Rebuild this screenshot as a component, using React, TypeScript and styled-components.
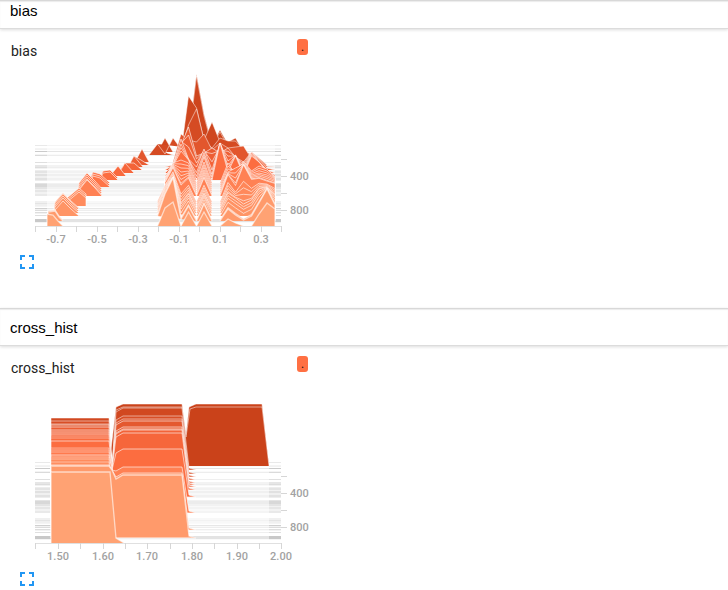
import React from "react";
import styled, { createGlobalStyle } from "styled-components";

const GlobalStyle = createGlobalStyle`
  * { box-sizing: border-box; }
  body { margin: 0; background: #fff; color: #111; font-family: Roboto, sans-serif; }
`;

const Page = styled.main`
  display: flex;
  flex-direction: column;
`;

const Section = styled.section`
  display: flex;
  flex-direction: column;

  &:not(:last-child) {
    padding-bottom: 34px;
  }
`;

const SectionHeader = styled.header<{ $compact: boolean }>`
  display: flex;
  align-items: center;
  height: ${(p) => (p.$compact ? 29 : 38)}px;
  padding: ${(p) => (p.$compact ? "0 10px 8px" : "2px 10px 0")};
  border-top: 1px solid #d8d8d8;
  border-bottom: 1px solid #dcdcdc;
  box-shadow: 0 1px 3px rgba(0, 0, 0, 0.14), inset 0 1px 1px rgba(0, 0, 0, 0.08);
`;

const SectionTitle = styled.h2`
  margin: 0;
  font: 400 15px/18px "Liberation Sans", Arial, sans-serif;
  color: #000;
`;

const Pane = styled.div`
  display: flex;
  flex-direction: column;
  align-items: flex-start;
  padding-top: 10px;
`;

const CardHead = styled.div`
  display: flex;
  justify-content: space-between;
  align-items: flex-start;
  width: 100%;
  max-width: 308px;
  padding-left: 11px;
`;

const CardTitle = styled.h3`
  margin: 0;
  padding-top: 3px;
  font: 400 14px/18px Roboto, sans-serif;
  color: #212121;
`;

const RunTag = styled.span`
  width: 11px;
  height: 16px;
  border-radius: 3px;
  background: #ff7043;
  color: #111;
  font: 400 12px/16px Roboto, sans-serif;
  text-align: center;
`;

const Chart = styled.svg`
  display: block;
  width: 320px;
  height: 180px;
  margin-top: 10px;
`;

const AxisLabel = styled.text`
  font: 500 11px Roboto, sans-serif;
  fill: #a2a2a2;
`;

const ExpandButton = styled.button`
  display: flex;
  margin-left: 15px;
  padding: 0;
  border: 0;
  background: none;
  color: #2196f3;
  cursor: pointer;
`;

type Point = [number, number];

const BASELINES = [
  149, 151, 152, 155, 162, 165, 167, 170, 173, 176, 178, 180, 183, 185, 187, 189, 191, 193, 195, 196,
  202, 204, 206, 208, 209, 211, 213, 216, 220, 221, 226,
];

// Row, thickness, opacity of the faint step lines behind the shapes.
const STRIPES: [number, number, number][] = [
  [145, 1, 0.1], [148, 1, 0.05], [149, 1, 0.06], [151, 1, 0.24], [154, 1, 0.05], [155, 1, 0.17], [162, 1, 0.15],
  [165, 2, 0.11], [167, 1, 0.16], [168, 1, 0.06], [170, 1, 0.08], [171, 2, 0.12], [173, 1, 0.06], [174, 2, 0.14],
  [176, 2, 0.07], [178, 2, 0.13], [180, 1, 0.08], [183, 1, 0.12], [184, 3, 0.18], [187, 2, 0.12], [189, 1, 0.06],
  [190, 2, 0.11], [192, 2, 0.06], [194, 2, 0.1], [201, 2, 0.07], [203, 1, 0.12], [204, 2, 0.07], [206, 1, 0.05],
  [208, 1, 0.22], [209, 1, 0.06], [210, 1, 0.16], [212, 1, 0.16], [213, 1, 0.06], [215, 1, 0.15], [219, 3, 0.26],
  [222, 1, 0.05],
];

const RAMP: [number, number[]][] = [
  [149, [202, 66, 26]],
  [158, [218, 80, 40]],
  [170, [243, 99, 56]],
  [183, [255, 112, 67]],
  [197, [255, 130, 85]],
  [221, [255, 154, 107]],
  [226, [255, 162, 115]],
];

function interpolate(frames: [number, number[]][], at: number): number[] {
  if (at <= frames[0][0]) return frames[0][1];
  for (let i = 1; i < frames.length; i++) {
    const [end, to] = frames[i];
    const [start, from] = frames[i - 1];
    if (at <= end) {
      const k = (at - start) / (end - start);
      return from.map((v, j) => v + (to[j] - v) * k);
    }
  }
  return frames[frames.length - 1][1];
}

const colorAt = (y: number) => `rgb(${interpolate(RAMP, y).map(Math.round).join(",")})`;

// Bin positions of the main group and, per step, the height of every bin.
const BINS = [157.5, 165, 173, 181, 188.5, 196.5, 204, 212, 220, 228, 235.5, 243.5, 251.5, 259, 267, 275];
const HEIGHTS: [number, number[]][] = [
  [151, [0, 0, 0, 0, 11, 75, 35, 5, 19, 5, 1, 0, 0, 0, 0, 0]],
  [152, [0, 14, 0, 0, 56, 44, 12, 30, 10, 10, 14, 0, 0, 0, 0, 0]],
  [153, [0, 1, 17, 0, 30, 46, 16, 12, 17, 13, 12, 3, 0, 0, 0, 0]],
  [155, [11, 1, 17, 6, 30, 46, 15, 7, 17, 14, 14, 5, 0, 0, 0, 0]],
  [162, [0, 0, 0, 28, 22, 20, 28, 12, 19, 14, 15, 16, 3, 0, 0, 0]],
  [165, [0, 0, 0, 20, 38, 9, 12, 17, 12, 17, 8, 3, 13, 7, 0, 0]],
  [173, [0, 0, 8, 34, 14, 6, 24, 3, 30, 12, 18, 2, 21, 11, 3, 0]],
  [180, [0, 0, 14, 29, 20, 0, 23, 0, 37, 8, 24, 5, 24, 18, 8, 2]],
  [183, [0, 4, 20, 23, 20, 0, 21, 0, 0, 20, 8, 22, 12, 17, 14, 6]],
  [189, [0, 9, 24, 17, 18, 0, 19, 0, 0, 17, 21, 25, 14, 16, 14, 10]],
  [197, [0, 14, 29, 10, 18, 0, 18, 0, 0, 22, 9, 32, 17, 18, 15, 13]],
  [209, [2, 21, 32, 5, 15, 0, 15, 0, 0, 16, 11, 5, 9, 20, 22, 14]],
  [221, [5, 27, 43, 2, 15, 0, 17, 0, 0, 12, 6, 1, 5, 18, 32, 16]],
  [226, [0, 18, 24, 0, 14, 0, 14, 0, 0, 7, 3, 0, 0, 12, 23, 17]],
];

// The drifting group, held up to each step: left edge, peak position, peak height, right edge.
const DRIFT: [number, Point[]][] = [
  [162, [[135, 0], [142, 13], [149, 0]]],
  [165, [[129, 0], [134, 9], [141, 5], [149, 0]]],
  [167, [[128, 0], [134, 11], [143, 0]]],
  [170, [[120, 0], [125, 7], [134, 7], [142, 0]]],
  [173, [[119, 0], [125, 10], [134, 0]]],
  [176, [[110, 0], [118, 10], [126, 0]]],
  [180, [[100, 0], [103, 7], [110, 8], [118, 0]]],
  [187, [[88, 0], [93, 11], [100, 9], [110, 0]]],
  [196, [[78, 0], [79, 6], [87, 16], [95, 8], [102, 0]]],
  [207, [[65, 0], [67, 4], [79, 14], [86, 8], [86, 0]]],
  [216, [[54, 0], [55, 6], [63, 15], [71, 7], [79, 0]]],
  [221, [[48, 0], [48, 9], [55, 10], [59, 4], [63, 0]]],
  [226, [[47, 0], [47, 12], [53, 11], [58, 5], [63, 0]]],
];

const toPath = (points: Point[]) => points.map(([x, y], i) => `${i ? "L" : "M"}${x.toFixed(1)} ${y.toFixed(1)}`).join("");

interface RidgeProps {
  points: Point[];
  base: number;
  faint?: boolean;
}

function Ridge({ points, base, faint = false }: RidgeProps) {
  return (
    <path
      d={toPath(points)}
      fill={colorAt(base)}
      stroke="#fff"
      strokeOpacity={faint ? 0.42 : base < 163 ? 0.5 : 0.6}
      strokeWidth={base > 216 ? 1.3 : 1}
    />
  );
}

function BiasPlot() {
  return (
    <>
      {BASELINES.map((b) => {
        const heights = interpolate(HEIGHTS, b);
        const sharpEdge = b > 182 && b < 200;
        const first = heights.findIndex((h) => h > 0.2);
        let last = heights.length - 1;
        while (heights[last] <= 0.2) last--;
        const from = Math.max(0, sharpEdge ? first : first - 1);
        const to = Math.min(heights.length - 1, last + 1);
        const runs: Point[][] = [];
        let current: Point[] = sharpEdge ? [[BINS[from], b]] : [];
        for (let i = from; i <= to; i++) {
          current.push([BINS[i], b - heights[i]]);
          if (heights[i] <= 0.2 && i > from) {
            runs.push(current);
            current = [[BINS[i], b]];
          }
        }
        if (current.length > 1) runs.push([...current, [BINS[to], b]]);
        if (b === 155) {
          runs.unshift([[149, 155], [157.5, 144], [167, 153], [173, 155]]);
        }
        const drift = b >= 162 ? DRIFT.find(([until]) => b <= until) : undefined;
        if (drift) {
          runs.push(drift[1].map(([x, h]): Point => [x, b - h]));
        }
        return runs.filter((r) => r.length > 2).map((r, i) => <Ridge key={`${b}-${i}`} points={r} base={b} />);
      })}
    </>
  );
}

// Baseline, top of the first column, top of the second column where it changes.
const STEPS: [number, number, number | null][] = [
  [153, 101, 91], [157, 104, 99], [160, 107, 102], [163, 108, 104], [166, 110, 110],
  [168, 113, 112], [170, 115, 113], [173, 117, 116], [176, 119, null], [178, 121, null], [180, 124, 132],
  [187, 131, null], [189, 133, null], [191, 135, null], [196, 138, 150],
  [202, 140, null], [206, 142, null], [209, 145, null], [213, 148, 156], [221, 149, 158],
];

function CrossPlot() {
  return (
    <>
      <Ridge base={149} points={[[109, 149], [116, 90], [123, 87], [182, 87], [186, 118], [189, 90], [196, 87], [262, 87], [269, 149]]} />
      <Ridge base={149} points={[[112, 149], [116, 93], [123, 90], [182, 90], [186, 120], [190, 92], [196, 90], [262, 90], [269, 149]]} />
      {STEPS.map(([b, first, second]) => {
        const firstColumn: Point[] = [[51, b], [51, first], [109, first]];
        return (
          <Ridge
            key={b}
            base={b}
            faint={second === null}
            points={
              second === null
                ? [...firstColumn, [112, first + 30], [112, b]]
                : [
                    ...firstColumn, [112, 153], [116, second + 4], [123, second],
                    [182, second], [189, b - 2], [196, b], [51, b],
                  ]
            }
          />
        );
      })}
      <Ridge base={226} points={[[51, 226], [51, 155], [110, 155], [116, 221], [124, 226]]} />
    </>
  );
}

interface HistogramProps {
  name: string;
  range: Point;
  ticks: number[];
  labels: [number, string][];
  children: React.ReactNode;
}

function Histogram({ name, range, ticks, labels, children }: HistogramProps) {
  return (
    <Chart viewBox="0 70 320 180" role="img" aria-label={`${name} histogram`}>
      <g shapeRendering="crispEdges">
        {STRIPES.map(([y, size, o]) => (
          <g key={y} fill="#000">
            <rect x={35} y={y} width={246} height={size} opacity={o * 0.42} />
            <rect x={35} y={y} width={range[0] - 35} height={size} opacity={o * 0.45} />
            <rect x={range[1]} y={y} width={281 - range[1]} height={size} opacity={o * 0.45} />
          </g>
        ))}
        <rect x={35} y={226} width={247} height={1} fill="#e0e0e0" />
        {ticks.map((x) => (
          <rect key={x} x={x} y={226} width={1} height={6} fill="#d6d6d6" />
        ))}
        {[159, 176, 193, 210].map((y) => (
          <rect key={y} x={281} y={y} width={6} height={1} fill="#d6d6d6" />
        ))}
      </g>
      {children}
      {labels.map(([x, label]) => (
        <AxisLabel key={label} x={x} y={243} textAnchor="middle">{label}</AxisLabel>
      ))}
      <AxisLabel x={290} y={180}>400</AxisLabel>
      <AxisLabel x={290} y={214}>800</AxisLabel>
    </Chart>
  );
}

interface HistogramSectionProps {
  name: string;
  compact?: boolean;
  children: React.ReactNode;
}

function HistogramSection({ name, compact = false, children }: HistogramSectionProps) {
  return (
    <Section>
      <SectionHeader $compact={compact}>
        <SectionTitle>{name}</SectionTitle>
      </SectionHeader>
      <Pane>
        <CardHead>
          <CardTitle>{name}</CardTitle>
          <RunTag>.</RunTag>
        </CardHead>
        {children}
        <ExpandButton type="button" aria-label={`Expand ${name}`}>
          <svg width="24" height="24" viewBox="0 0 24 24" fill="currentColor" aria-hidden="true">
            <path d="M5 5h5v2H7v3H5zM14 5h5v5h-2V7h-3zM5 14h2v3h3v2H5zM17 14h2v5h-5v-2h3z" />
          </svg>
        </ExpandButton>
      </Pane>
    </Section>
  );
}

export default function App() {
  return (
    <Page>
      <GlobalStyle />
      <HistogramSection name="bias" compact>
        <Histogram
          name="bias"
          range={[47, 275]}
          ticks={[35, 56, 76, 97, 117, 138, 158, 179, 199, 220, 240, 261, 281]}
          labels={[[56, "-0.7"], [97, "-0.5"], [138, "-0.3"], [179, "-0.1"], [220, "0.1"], [261, "0.3"]]}
        >
          <BiasPlot />
        </Histogram>
      </HistogramSection>
      <HistogramSection name="cross_hist">
        <Histogram
          name="cross_hist"
          range={[51, 269]}
          ticks={[35, 58, 80, 103, 125, 147, 170, 192, 214, 237, 259, 281]}
          labels={[[58, "1.50"], [103, "1.60"], [147, "1.70"], [192, "1.80"], [237, "1.90"], [281, "2.00"]]}
        >
          <CrossPlot />
        </Histogram>
      </HistogramSection>
    </Page>
  );
}
